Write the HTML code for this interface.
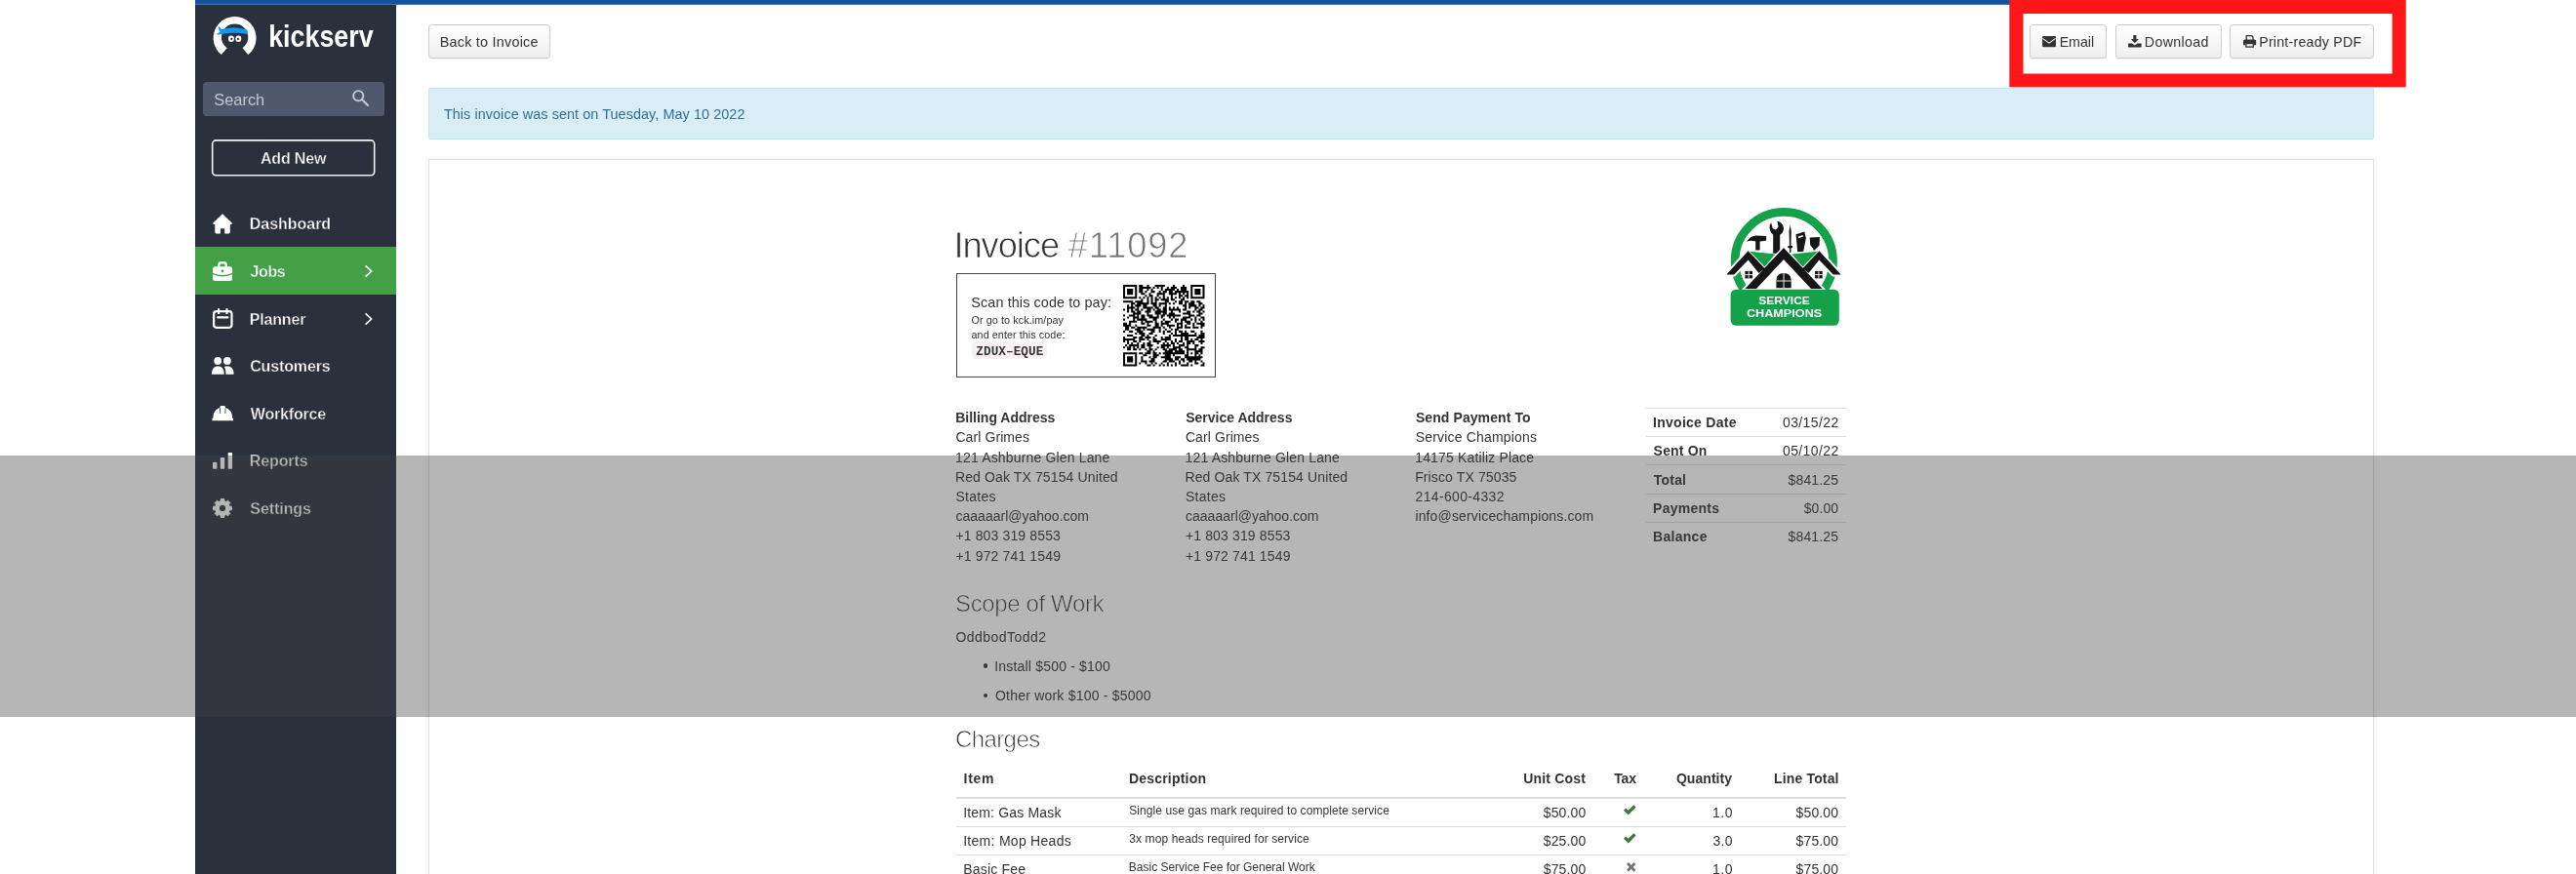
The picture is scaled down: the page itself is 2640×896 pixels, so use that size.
<!DOCTYPE html>
<html><head><meta charset="utf-8"><title>Invoice #11092</title>
<style>
html,body{margin:0;padding:0}
body{width:2640px;height:896px;overflow:hidden;background:#fff;position:relative;font-family:"Liberation Sans",sans-serif;color:#333}
.t{position:absolute;white-space:nowrap;display:block}
.r{position:absolute}
svg{position:absolute;overflow:visible}
#w{position:absolute;left:0;top:0;width:2640px;height:896px;overflow:hidden;will-change:transform}
</style></head><body><div id="w">
<div class="r" style="left:200px;top:0px;width:2265px;height:4px;background:#15549c;"></div>
<div class="r" style="left:406px;top:4px;width:2059px;height:1px;background:#3a70b0;"></div>
<div class="r" style="left:200px;top:4px;width:206px;height:1px;background:#3e75b2;"></div>
<div class="r" style="left:200px;top:5px;width:206px;height:891px;background:#2b303d;"></div>
<div class="r" style="left:207.5px;top:84px;width:186.6px;height:35px;background:#50586c;border-radius:4px;"></div>
<span class="t" style="left:219.18px;top:91px;font-size:16.4px;line-height:22px;color:#c4c8d4;letter-spacing:0.023px;">Search</span>
<svg style="left:361.2px;top:91.8px" width="17" height="17" viewBox="0 0 17 17"><circle cx="6.2" cy="6.2" r="5.1" fill="none" stroke="#c4c8d4" stroke-width="1.9"/><path d="M10 10 L16 16" stroke="#c4c8d4" stroke-width="2.2" stroke-linecap="round"/></svg>
<svg style="left:0;top:0" width="420" height="200" viewBox="0 0 420 200"><rect x="217.7" y="143.9" width="166" height="35.8" rx="3.6" fill="none" stroke="#f2f2f2" stroke-width="1.6"/></svg>
<span class="t" style="left:266.92px;top:152px;font-size:16px;line-height:21px;font-weight:700;color:#fff;letter-spacing:-0.149px;-webkit-text-stroke:.35px #2b303d;">Add New</span>
<div class="r" style="left:200px;top:253.2px;width:206px;height:48.9px;background:#43a047;"></div>
<span class="t" style="left:255.74px;top:219px;font-size:16px;line-height:21px;font-weight:700;color:#fff;letter-spacing:-0.021px;-webkit-text-stroke:.35px #2b303d;">Dashboard</span>
<span class="t" style="left:256.58px;top:268px;font-size:16px;line-height:21px;font-weight:700;color:#fff;letter-spacing:-0.393px;-webkit-text-stroke:.35px #43a047;">Jobs</span>
<span class="t" style="left:255.74px;top:317px;font-size:16px;line-height:21px;font-weight:700;color:#fff;letter-spacing:-0.168px;-webkit-text-stroke:.35px #2b303d;">Planner</span>
<span class="t" style="left:256.16px;top:365px;font-size:16px;line-height:21px;font-weight:700;color:#fff;letter-spacing:-0.125px;-webkit-text-stroke:.35px #2b303d;">Customers</span>
<span class="t" style="left:256.80px;top:414px;font-size:16px;line-height:21px;font-weight:700;color:#fff;letter-spacing:-0.176px;-webkit-text-stroke:.35px #2b303d;">Workforce</span>
<span class="t" style="left:255.74px;top:462px;font-size:16px;line-height:21px;font-weight:700;color:#fff;letter-spacing:-0.109px;-webkit-text-stroke:.35px #2b303d;">Reports</span>
<span class="t" style="left:256.35px;top:511px;font-size:16px;line-height:21px;font-weight:700;color:#fff;letter-spacing:-0.074px;-webkit-text-stroke:.35px #2b303d;">Settings</span>
<svg style="left:217.8px;top:218.7px" width="20.1" height="20.4" viewBox="0 0 20.1 20.4"><path fill="#fff" d="M10.05 0.3 L0.4 9.6 Q-0.2 10.6 0.9 11 L2.3 11 L2.3 19 Q2.3 20.4 3.7 20.4 L7.9 20.4 L7.9 15.2 L12.2 15.2 L12.2 20.4 L16.4 20.4 Q17.8 20.4 17.8 19 L17.8 11 L19.2 11 Q20.3 10.6 19.7 9.6 Z"/></svg>
<svg style="left:217.8px;top:267.8px" width="20.1" height="20.1" viewBox="0 0 20.1 20.1"><path d="M6.3 5.8 V3.7 Q6.3 1.2 8.8 1.2 H11.3 Q13.8 1.2 13.8 3.7 V5.8" fill="none" stroke="#fff" stroke-width="2.4"/><rect x="0" y="5.2" width="20.1" height="14.9" rx="2.5" fill="#fff"/><path d="M-0.6 12.4 Q10.05 17.2 20.7 12.4" fill="none" stroke="#43a047" stroke-width="1.5"/><circle cx="10" cy="9.8" r="1.4" fill="#43a047"/></svg>
<svg style="left:217.5px;top:316px" width="20.6" height="20.9" viewBox="0 0 20.6 20.9"><rect x="1.1" y="3.2" width="18.4" height="16.6" rx="2.7" fill="none" stroke="#fff" stroke-width="2.2"/><path d="M6.1 0.2 V6 M14.5 0.2 V6" stroke="#fff" stroke-width="2.1" fill="none"/><path d="M5.2 9.4 H15.4" stroke="#fff" stroke-width="2.2" stroke-linecap="round" fill="none"/></svg>
<svg style="left:216.6px;top:366.2px" width="22.6" height="17.7" viewBox="0 0 22.6 17.7"><circle cx="6.2" cy="3.9" r="3.9" fill="#fff"/><circle cx="15.9" cy="3.9" r="3.9" fill="#fff"/><path fill="#fff" d="M0 17.7 C0 12 2.5 9.6 6.35 9.6 C10.2 9.6 12.7 12 12.7 17.7 Z"/><path fill="#fff" d="M14.5 17.7 C14.5 14.4 14 12 12.9 10.1 C13.9 9.7 15 9.6 16 9.6 C20 9.6 22.6 12 22.6 17.7 Z"/></svg>
<svg style="left:216.6px;top:415.8px" width="22.5" height="15.2" viewBox="0 0 22.5 15.2"><path fill="#fff" d="M0.5 15.2 Q-0.5 13.2 1.5 12.2 Q1.2 4.6 8.5 1.8 L8.7 0.6 Q8.8 0 9.5 0 H13 Q13.7 0 13.8 0.6 L14 1.8 Q21.3 4.6 21 12.2 Q23 13.2 22 15.2 Z"/><path d="M8.3 2.2 L8.7 8 M14.2 2.2 L13.8 8" stroke="#2b303d" stroke-width="0.8"/></svg>
<svg style="left:217.9px;top:463.7px" width="20.1" height="16.8" viewBox="0 0 20.1 16.8"><rect x="0" y="9.8" width="4.4" height="7" rx="0.8" fill="#fff"/><rect x="7.8" y="4.9" width="4.4" height="11.9" rx="0.8" fill="#fff"/><rect x="15.7" y="0" width="4.4" height="16.8" rx="0.8" fill="#fff"/></svg>
<svg style="left:217.9px;top:510.6px" width="20" height="20" viewBox="0 0 20 20"><path fill="#fff" stroke="#fff" stroke-width="1" stroke-linejoin="round" fill-rule="evenodd" d="M8.03 2.87 L8.38 0.54 L11.62 0.54 L11.97 2.87 L13.65 3.56 L15.54 2.16 L17.84 4.46 L16.44 6.35 L17.13 8.03 L19.46 8.38 L19.46 11.62 L17.13 11.97 L16.44 13.65 L17.84 15.54 L15.54 17.84 L13.65 16.44 L11.97 17.13 L11.62 19.46 L8.38 19.46 L8.03 17.13 L6.35 16.44 L4.46 17.84 L2.16 15.54 L3.56 13.65 L2.87 11.97 L0.54 11.62 L0.54 8.38 L2.87 8.03 L3.56 6.35 L2.16 4.46 L4.46 2.16 L6.35 3.56 Z M13.7 10 A3.7 3.7 0 1 0 6.3 10 A3.7 3.7 0 1 0 13.7 10 Z"/></svg>
<svg style="left:373.6px;top:271.9px" width="8" height="12" viewBox="0 0 8 12"><path d="M0.6 0.4 L6.6 6 L0.6 11.6" fill="none" stroke="#fff" stroke-width="1.6"/></svg>
<svg style="left:373.6px;top:320.5px" width="8" height="12" viewBox="0 0 8 12"><path d="M0.6 0.4 L6.6 6 L0.6 11.6" fill="none" stroke="#fff" stroke-width="1.6"/></svg>
<svg style="left:216px;top:14px" width="50" height="46" viewBox="216 14 50 46">
<path fill="#fff" d="M226.9 56.1 A22 22 0 1 1 254.3 56.1 L248.5 49.3 A13.7 13.7 0 1 0 232.7 49.3 Z"/>
<path fill="#0c97fb" d="M226.8 30.2 Q241 25.9 253.5 30.7 L254.2 35.1 Q240.6 32.3 226.8 34.9 Z"/>
<path fill="#0c97fb" d="M227.6 31 L224.6 26.9 Q222.6 29 225.6 32.4 L222 35 Q223.6 36.6 227.4 34.6 Z"/>
<ellipse cx="236.9" cy="39.7" rx="3" ry="3.3" fill="#fff"/><ellipse cx="244.3" cy="39.7" rx="3" ry="3.3" fill="#fff"/>
<circle cx="237.3" cy="39.9" r="1.15" fill="#2b303d"/><circle cx="243.9" cy="39.9" r="1.15" fill="#2b303d"/>
<text x="275.2" y="48" font-family="Liberation Sans, sans-serif" font-weight="700" font-size="31" fill="#fff" textLength="107.4" lengthAdjust="spacingAndGlyphs">kickserv</text>
</svg>
<div class="r" style="left:438.9px;top:25.2px;width:125.1px;height:34.4px;background:linear-gradient(#fff,#eee);box-sizing:border-box;border:1px solid #ccc;border-radius:3.2px;box-shadow:0 1px 1px rgba(0,0,0,.06);"></div>
<span class="t" style="left:450.72px;top:33px;font-size:14.4px;line-height:20px;letter-spacing:0.232px;">Back to Invoice</span>
<div class="r" style="left:2080.2px;top:25.2px;width:78.7px;height:34.4px;background:linear-gradient(#fff,#eee);box-sizing:border-box;border:1px solid #ccc;border-radius:3.2px;box-shadow:0 1px 1px rgba(0,0,0,.06);"></div>
<span class="t" style="left:2110.64px;top:33px;font-size:14.2px;line-height:20px;">Email</span>
<div class="r" style="left:2168.2px;top:25.2px;width:108.6px;height:34.4px;background:linear-gradient(#fff,#eee);box-sizing:border-box;border:1px solid #ccc;border-radius:3.2px;box-shadow:0 1px 1px rgba(0,0,0,.06);"></div>
<span class="t" style="left:2197.84px;top:33px;font-size:14.2px;line-height:20px;letter-spacing:0.359px;">Download</span>
<div class="r" style="left:2285.4px;top:25.2px;width:147.6px;height:34.4px;background:linear-gradient(#fff,#eee);box-sizing:border-box;border:1px solid #ccc;border-radius:3.2px;box-shadow:0 1px 1px rgba(0,0,0,.06);"></div>
<span class="t" style="left:2315.24px;top:33px;font-size:14.2px;line-height:20px;letter-spacing:0.223px;">Print-ready PDF</span>
<svg style="left:2093.1px;top:37.4px" width="14" height="11.3" viewBox="0 0 14 11.3"><rect width="14" height="11.3" rx="1.4" fill="#333"/><path d="M0.3 2.4 L7 7.2 L13.7 2.4" fill="none" stroke="#f4f4f4" stroke-width="1.1"/></svg>
<svg style="left:2181px;top:35.5px" width="13.7" height="12.4" viewBox="0 0 13.7 12.4"><path fill="#333" d="M5.3 0 H8.4 V4 H11 L6.85 8.3 L2.7 4 H5.3 Z"/><path fill="#333" d="M0.6 8.4 H4 L6.85 10.4 L9.7 8.4 H13.1 Q13.7 8.4 13.7 9 V11.8 Q13.7 12.4 13.1 12.4 H0.6 Q0 12.4 0 11.8 V9 Q0 8.4 0.6 8.4 Z"/></svg>
<svg style="left:2298.6px;top:35.9px" width="13.2" height="12.8" viewBox="0 0 13.2 12.8"><path fill="none" stroke="#333" stroke-width="1.3" d="M3.2 5 V0.7 H8.6 L10 2.1 V5"/><path fill="#333" d="M1.6 4.6 H11.6 Q13.2 4.6 13.2 6.2 V9.6 Q13.2 10.2 12.6 10.2 H11 V8 H2.2 V10.2 H0.6 Q0 10.2 0 9.6 V6.2 Q0 4.6 1.6 4.6 Z"/><rect x="2.9" y="8.6" width="7.4" height="3.5" fill="none" stroke="#333" stroke-width="1.3"/></svg>
<div class="r" style="left:438.9px;top:90.4px;width:1994.3px;height:52.2px;background:#d9edf7;box-sizing:border-box;border:1px solid #bce8f1;border-radius:2px;"></div>
<span class="t" style="left:454.88px;top:107px;font-size:14.4px;line-height:20px;color:#31708f;letter-spacing:0.073px;">This invoice was sent on Tuesday, May 10 2022</span>
<div class="r" style="left:438.5px;top:163.3px;width:1994.7px;height:760px;background:#fff;box-sizing:border-box;border:1px solid #e0e0e0;box-shadow:0 0 5px rgba(0,0,0,.08);"></div>
<span class="t" style="left:977.46px;top:229px;font-size:36.3px;line-height:45px;letter-spacing:-1.060px;-webkit-text-stroke:.75px #fff;">Invoice</span>
<span class="t" style="left:1094.85px;top:229px;font-size:36.3px;line-height:45px;color:#777;letter-spacing:0.810px;-webkit-text-stroke:.75px #fff;">#11092</span>
<div class="r" style="left:979.9px;top:280.3px;width:266.5px;height:106.7px;background:#fff;box-sizing:border-box;border:1px solid #444;"></div>
<span class="t" style="left:995.37px;top:300px;font-size:14.4px;line-height:20px;letter-spacing:0.097px;">Scan this code to pay:</span>
<span class="t" style="left:995.50px;top:320px;font-size:10.8px;line-height:16px;letter-spacing:0.083px;">Or go to kck.im/pay</span>
<span class="t" style="left:995.55px;top:335px;font-size:10.8px;line-height:16px;letter-spacing:0.056px;">and enter this code:</span>
<div class="r" style="left:996px;top:350.3px;width:77px;height:18px;background:#f9f2f4;border-radius:4px;"></div>
<span class="t" style="left:1000.27px;top:352px;font-size:12.6px;line-height:18px;font-weight:700;font-family:'Liberation Mono',monospace;letter-spacing:0.124px;">ZDUX–EQUE</span>
<svg style="left:1150.8px;top:292px" width="83.5" height="83.5" viewBox="0 0 41 41"><path fill="#000" d="M0 0h7v1h-7zM8 0h2v1h-2zM12 0h1v1h-1zM16 0h5v1h-5zM25 0h1v1h-1zM30 0h1v1h-1zM34 0h7v1h-7zM0 1h1v1h-1zM6 1h1v1h-1zM8 1h6v1h-6zM15 1h1v1h-1zM17 1h1v1h-1zM19 1h1v1h-1zM22 1h1v1h-1zM24 1h3v1h-3zM29 1h3v1h-3zM34 1h1v1h-1zM40 1h1v1h-1zM0 2h1v1h-1zM2 2h3v1h-3zM6 2h1v1h-1zM8 2h2v1h-2zM12 2h1v1h-1zM14 2h1v1h-1zM19 2h1v1h-1zM21 2h5v1h-5zM27 2h1v1h-1zM29 2h3v1h-3zM34 2h1v1h-1zM36 2h3v1h-3zM40 2h1v1h-1zM0 3h1v1h-1zM2 3h3v1h-3zM6 3h1v1h-1zM8 3h2v1h-2zM11 3h1v1h-1zM14 3h2v1h-2zM18 3h1v1h-1zM20 3h2v1h-2zM23 3h2v1h-2zM26 3h7v1h-7zM34 3h1v1h-1zM36 3h3v1h-3zM40 3h1v1h-1zM0 4h1v1h-1zM2 4h3v1h-3zM6 4h1v1h-1zM9 4h2v1h-2zM13 4h1v1h-1zM17 4h4v1h-4zM23 4h4v1h-4zM28 4h1v1h-1zM30 4h1v1h-1zM32 4h1v1h-1zM34 4h1v1h-1zM36 4h3v1h-3zM40 4h1v1h-1zM0 5h1v1h-1zM6 5h1v1h-1zM11 5h1v1h-1zM13 5h2v1h-2zM17 5h1v1h-1zM20 5h1v1h-1zM24 5h1v1h-1zM28 5h2v1h-2zM31 5h2v1h-2zM34 5h1v1h-1zM40 5h1v1h-1zM0 6h7v1h-7zM8 6h1v1h-1zM10 6h1v1h-1zM12 6h1v1h-1zM14 6h1v1h-1zM16 6h1v1h-1zM18 6h1v1h-1zM20 6h1v1h-1zM22 6h1v1h-1zM24 6h1v1h-1zM26 6h1v1h-1zM28 6h1v1h-1zM30 6h1v1h-1zM32 6h1v1h-1zM34 6h7v1h-7zM9 7h1v1h-1zM12 7h1v1h-1zM14 7h1v1h-1zM16 7h2v1h-2zM19 7h4v1h-4zM24 7h2v1h-2zM29 7h2v1h-2zM0 8h5v1h-5zM6 8h4v1h-4zM12 8h1v1h-1zM14 8h1v1h-1zM16 8h1v1h-1zM21 8h2v1h-2zM26 8h1v1h-1zM28 8h2v1h-2zM31 8h2v1h-2zM34 8h2v1h-2zM37 8h2v1h-2zM4 9h2v1h-2zM7 9h6v1h-6zM14 9h3v1h-3zM18 9h4v1h-4zM23 9h1v1h-1zM25 9h1v1h-1zM28 9h2v1h-2zM31 9h1v1h-1zM33 9h3v1h-3zM38 9h2v1h-2zM2 10h1v1h-1zM4 10h1v1h-1zM6 10h3v1h-3zM10 10h2v1h-2zM15 10h2v1h-2zM18 10h1v1h-1zM21 10h1v1h-1zM30 10h2v1h-2zM33 10h4v1h-4zM38 10h1v1h-1zM40 10h1v1h-1zM2 11h4v1h-4zM7 11h1v1h-1zM10 11h5v1h-5zM16 11h2v1h-2zM20 11h2v1h-2zM23 11h1v1h-1zM25 11h1v1h-1zM27 11h1v1h-1zM31 11h1v1h-1zM33 11h1v1h-1zM36 11h2v1h-2zM39 11h2v1h-2zM0 12h1v1h-1zM2 12h1v1h-1zM4 12h1v1h-1zM6 12h2v1h-2zM9 12h1v1h-1zM12 12h2v1h-2zM15 12h1v1h-1zM17 12h2v1h-2zM20 12h2v1h-2zM23 12h6v1h-6zM30 12h2v1h-2zM36 12h1v1h-1zM38 12h2v1h-2zM2 13h1v1h-1zM4 13h2v1h-2zM7 13h2v1h-2zM11 13h3v1h-3zM16 13h6v1h-6zM24 13h1v1h-1zM28 13h1v1h-1zM32 13h2v1h-2zM35 13h1v1h-1zM37 13h2v1h-2zM40 13h1v1h-1zM5 14h4v1h-4zM12 14h1v1h-1zM16 14h3v1h-3zM20 14h2v1h-2zM23 14h3v1h-3zM30 14h4v1h-4zM38 14h2v1h-2zM0 15h1v1h-1zM3 15h3v1h-3zM7 15h1v1h-1zM9 15h2v1h-2zM12 15h3v1h-3zM17 15h1v1h-1zM19 15h2v1h-2zM22 15h7v1h-7zM33 15h3v1h-3zM37 15h2v1h-2zM2 16h1v1h-1zM5 16h3v1h-3zM9 16h2v1h-2zM13 16h5v1h-5zM19 16h1v1h-1zM23 16h1v1h-1zM25 16h1v1h-1zM30 16h4v1h-4zM36 16h1v1h-1zM39 16h2v1h-2zM0 17h1v1h-1zM5 17h1v1h-1zM7 17h5v1h-5zM15 17h2v1h-2zM20 17h1v1h-1zM24 17h1v1h-1zM26 17h2v1h-2zM29 17h3v1h-3zM34 17h1v1h-1zM36 17h1v1h-1zM38 17h1v1h-1zM40 17h1v1h-1zM3 18h4v1h-4zM9 18h1v1h-1zM11 18h4v1h-4zM16 18h1v1h-1zM19 18h1v1h-1zM21 18h3v1h-3zM26 18h1v1h-1zM29 18h1v1h-1zM31 18h3v1h-3zM36 18h1v1h-1zM39 18h1v1h-1zM0 19h2v1h-2zM3 19h1v1h-1zM9 19h2v1h-2zM12 19h1v1h-1zM16 19h2v1h-2zM19 19h4v1h-4zM27 19h3v1h-3zM32 19h2v1h-2zM35 19h1v1h-1zM37 19h4v1h-4zM0 20h4v1h-4zM6 20h1v1h-1zM12 20h2v1h-2zM16 20h2v1h-2zM19 20h1v1h-1zM22 20h4v1h-4zM27 20h1v1h-1zM29 20h1v1h-1zM31 20h1v1h-1zM35 20h1v1h-1zM39 20h2v1h-2zM1 21h2v1h-2zM4 21h2v1h-2zM7 21h5v1h-5zM15 21h4v1h-4zM20 21h1v1h-1zM23 21h1v1h-1zM27 21h3v1h-3zM31 21h3v1h-3zM35 21h3v1h-3zM39 21h1v1h-1zM1 22h2v1h-2zM6 22h3v1h-3zM10 22h1v1h-1zM12 22h4v1h-4zM18 22h1v1h-1zM21 22h1v1h-1zM24 22h1v1h-1zM26 22h2v1h-2zM0 23h1v1h-1zM3 23h2v1h-2zM7 23h3v1h-3zM14 23h2v1h-2zM18 23h1v1h-1zM20 23h1v1h-1zM22 23h2v1h-2zM26 23h1v1h-1zM28 23h2v1h-2zM31 23h1v1h-1zM34 23h2v1h-2zM39 23h1v1h-1zM6 24h1v1h-1zM8 24h3v1h-3zM13 24h2v1h-2zM20 24h1v1h-1zM24 24h1v1h-1zM26 24h1v1h-1zM29 24h4v1h-4zM36 24h1v1h-1zM39 24h2v1h-2zM2 25h3v1h-3zM9 25h2v1h-2zM12 25h1v1h-1zM16 25h1v1h-1zM23 25h1v1h-1zM25 25h12v1h-12zM38 25h3v1h-3zM0 26h1v1h-1zM5 26h2v1h-2zM8 26h2v1h-2zM11 26h3v1h-3zM15 26h1v1h-1zM19 26h1v1h-1zM21 26h3v1h-3zM29 26h1v1h-1zM31 26h2v1h-2zM37 26h4v1h-4zM0 27h6v1h-6zM8 27h3v1h-3zM12 27h1v1h-1zM15 27h2v1h-2zM19 27h5v1h-5zM26 27h1v1h-1zM29 27h1v1h-1zM31 27h2v1h-2zM34 27h1v1h-1zM36 27h2v1h-2zM39 27h1v1h-1zM0 28h1v1h-1zM2 28h1v1h-1zM5 28h2v1h-2zM8 28h1v1h-1zM13 28h1v1h-1zM15 28h4v1h-4zM21 28h1v1h-1zM24 28h1v1h-1zM26 28h1v1h-1zM28 28h2v1h-2zM32 28h4v1h-4zM38 28h3v1h-3zM2 29h1v1h-1zM4 29h1v1h-1zM7 29h1v1h-1zM10 29h1v1h-1zM12 29h2v1h-2zM17 29h1v1h-1zM20 29h1v1h-1zM22 29h1v1h-1zM24 29h2v1h-2zM27 29h1v1h-1zM30 29h1v1h-1zM32 29h2v1h-2zM35 29h1v1h-1zM39 29h1v1h-1zM1 30h1v1h-1zM3 30h5v1h-5zM9 30h2v1h-2zM12 30h3v1h-3zM19 30h5v1h-5zM25 30h1v1h-1zM28 30h3v1h-3zM32 30h1v1h-1zM36 30h2v1h-2zM0 31h1v1h-1zM2 31h2v1h-2zM5 31h1v1h-1zM7 31h1v1h-1zM9 31h2v1h-2zM13 31h1v1h-1zM17 31h1v1h-1zM19 31h2v1h-2zM22 31h1v1h-1zM25 31h4v1h-4zM31 31h2v1h-2zM36 31h1v1h-1zM39 31h2v1h-2zM2 32h2v1h-2zM5 32h2v1h-2zM8 32h1v1h-1zM11 32h1v1h-1zM13 32h2v1h-2zM16 32h1v1h-1zM20 32h2v1h-2zM23 32h4v1h-4zM28 32h2v1h-2zM32 32h5v1h-5zM38 32h2v1h-2zM12 33h2v1h-2zM15 33h1v1h-1zM21 33h4v1h-4zM26 33h5v1h-5zM32 33h1v1h-1zM36 33h4v1h-4zM0 34h7v1h-7zM8 34h2v1h-2zM11 34h3v1h-3zM15 34h2v1h-2zM18 34h1v1h-1zM20 34h11v1h-11zM32 34h1v1h-1zM34 34h1v1h-1zM36 34h2v1h-2zM39 34h1v1h-1zM0 35h1v1h-1zM6 35h1v1h-1zM10 35h2v1h-2zM15 35h3v1h-3zM21 35h3v1h-3zM25 35h1v1h-1zM31 35h2v1h-2zM36 35h1v1h-1zM38 35h1v1h-1zM0 36h1v1h-1zM2 36h3v1h-3zM6 36h1v1h-1zM9 36h1v1h-1zM13 36h1v1h-1zM15 36h2v1h-2zM19 36h5v1h-5zM26 36h3v1h-3zM31 36h9v1h-9zM0 37h1v1h-1zM2 37h3v1h-3zM6 37h1v1h-1zM9 37h1v1h-1zM14 37h2v1h-2zM21 37h4v1h-4zM26 37h2v1h-2zM29 37h2v1h-2zM32 37h7v1h-7zM0 38h1v1h-1zM2 38h3v1h-3zM6 38h1v1h-1zM9 38h3v1h-3zM13 38h3v1h-3zM20 38h2v1h-2zM23 38h3v1h-3zM28 38h1v1h-1zM30 38h1v1h-1zM33 38h2v1h-2zM36 38h1v1h-1zM39 38h1v1h-1zM0 39h1v1h-1zM6 39h1v1h-1zM8 39h1v1h-1zM11 39h1v1h-1zM14 39h1v1h-1zM16 39h1v1h-1zM19 39h1v1h-1zM22 39h1v1h-1zM26 39h1v1h-1zM28 39h1v1h-1zM32 39h1v1h-1zM36 39h2v1h-2zM40 39h1v1h-1zM0 40h7v1h-7zM12 40h2v1h-2zM15 40h1v1h-1zM18 40h1v1h-1zM20 40h1v1h-1zM22 40h1v1h-1zM24 40h1v1h-1zM26 40h1v1h-1zM29 40h4v1h-4zM34 40h1v1h-1zM39 40h2v1h-2z"/></svg>
<svg style="left:1760px;top:205px" width="140" height="135" viewBox="1760 205 140 135">
<circle cx="1828.3" cy="267.6" r="50.2" fill="none" stroke="#15a04a" stroke-width="8.7"/>
<path fill="#fff" stroke="#fff" stroke-width="4" d="M1769.3 281.6 L1791.6 257.2 L1808.5 275.1 L1802.5 280 L1791.6 266.4 L1777.2 281.6 Z M1886.7 281.6 L1864.4 257.2 L1847.5 275.1 L1853.5 280 L1864.4 266.4 L1878.8 281.6 Z M1788.4 295.9 L1828 253.9 L1867.6 295.9 L1856 295.9 L1828 265.9 L1800 295.9 Z"/>
<path fill="#15a04a" d="M1793.3 257.7 L1819.3 260.4 L1808.5 273.5 Z M1862.8 257.7 L1836.2 260.4 L1847.6 273.5 Z"/>
<path fill="#161616" d="M1769.3 281.6 L1791.6 257.2 L1808.5 275.1 L1802.5 280 L1791.6 266.4 L1777.2 281.6 Z M1886.7 281.6 L1864.4 257.2 L1847.5 275.1 L1853.5 280 L1864.4 266.4 L1878.8 281.6 Z M1788.4 295.9 L1828 253.9 L1867.6 295.9 L1856 295.9 L1828 265.9 L1800 295.9 Z"/>
<rect x="1788.4" y="277.8" width="7.6" height="7.6" fill="#161616"/><path d="M1792.2 277.8 V285.4 M1788.4 281.6 H1796" stroke="#fff" stroke-width="0.9"/>
<rect x="1860.1" y="277.8" width="7.6" height="7.6" fill="#161616"/><path d="M1863.9 277.8 V285.4 M1860.1 281.6 H1867.7" stroke="#fff" stroke-width="0.9"/>
<path fill="#161616" d="M1820.4 295.2 V287.6 Q1820.4 280 1828.05 280 Q1835.7 280 1835.7 287.6 V295.2 Z"/><path d="M1828.05 280 V295.2 M1820.4 288 H1835.7" stroke="#fff" stroke-width="0.9"/>
<path fill="#161616" d="M1790 247.9 Q1794 241.4 1800 241.5 L1810.1 241.9 L1810.1 246.8 L1803.6 247.6 L1803.6 256.4 L1799.2 256.4 L1799.2 247.4 Q1794 246 1790 247.9 Z"/>
<path fill="#161616" d="M1817.2 259.5 L1817.2 240.5 Q1813 237.5 1813.6 231 L1815.2 228.2 L1816.8 234.2 L1820 235.6 L1822.6 232.6 L1821.4 226.8 Q1827 228 1828 233.4 Q1828.2 238 1824.2 240.8 L1824.2 256 L1820 260 Z"/>
<path fill="#161616" d="M1834 258.8 L1834 254.4 L1832.2 254 L1832.2 252.2 L1834 251.8 L1833.5 237 L1834.6 230.5 L1835.8 237 L1835.4 251.8 L1837.2 252.2 L1837.2 254 L1835.4 254.4 L1835.6 258.8 Z"/>
<path fill="#161616" fill-rule="evenodd" d="M1840.5 240.3 L1849.2 237.6 L1850.9 244.1 L1848.2 257.7 L1842.2 258.3 Z M1842.7 242.5 L1847.6 240.9 L1848.2 242.5 L1843.3 244.3 Z"/>
<path fill="#161616" d="M1854.7 243.6 L1865 243 L1864.5 251.7 L1860.7 255.2 L1860.1 256.6 L1858.5 256.6 L1858.3 255 L1855.2 251.2 Z"/>
<rect x="1773.6" y="296.7" width="111.2" height="37.1" rx="5.5" fill="#15a04a"/>
<text x="1828.6" y="311.8" text-anchor="middle" font-family="Liberation Sans, sans-serif" font-weight="700" font-size="11.4" fill="#fff" textLength="52.5" lengthAdjust="spacingAndGlyphs">SERVICE</text>
<text x="1828.6" y="324.6" text-anchor="middle" font-family="Liberation Sans, sans-serif" font-weight="700" font-size="11.4" fill="#fff" textLength="77.3" lengthAdjust="spacingAndGlyphs">CHAMPIONS</text>
</svg>
<span class="t" style="left:979.18px;top:418px;font-size:14px;line-height:20px;font-weight:700;">Billing Address</span>
<span class="t" style="left:979.40px;top:438px;font-size:14px;line-height:20px;letter-spacing:0.093px;">Carl Grimes</span>
<span class="t" style="left:979.04px;top:459px;font-size:14px;line-height:20px;letter-spacing:0.161px;">121 Ashburne Glen Lane</span>
<span class="t" style="left:978.95px;top:479px;font-size:14px;line-height:20px;letter-spacing:0.123px;">Red Oak TX 75154 United</span>
<span class="t" style="left:979.48px;top:499px;font-size:14px;line-height:20px;letter-spacing:0.263px;">States</span>
<span class="t" style="left:979.51px;top:519px;font-size:14px;line-height:20px;letter-spacing:0.006px;">caaaaarl@yahoo.com</span>
<span class="t" style="left:979.43px;top:539px;font-size:14px;line-height:20px;letter-spacing:0.140px;">+1 803 319 8553</span>
<span class="t" style="left:979.43px;top:560px;font-size:14px;line-height:20px;letter-spacing:0.144px;">+1 972 741 1549</span>
<span class="t" style="left:1215.21px;top:418px;font-size:14px;line-height:20px;font-weight:700;">Service Address</span>
<span class="t" style="left:1214.90px;top:438px;font-size:14px;line-height:20px;letter-spacing:0.093px;">Carl Grimes</span>
<span class="t" style="left:1214.54px;top:459px;font-size:14px;line-height:20px;letter-spacing:0.161px;">121 Ashburne Glen Lane</span>
<span class="t" style="left:1214.45px;top:479px;font-size:14px;line-height:20px;letter-spacing:0.123px;">Red Oak TX 75154 United</span>
<span class="t" style="left:1214.98px;top:499px;font-size:14px;line-height:20px;letter-spacing:0.263px;">States</span>
<span class="t" style="left:1215.01px;top:519px;font-size:14px;line-height:20px;letter-spacing:0.006px;">caaaaarl@yahoo.com</span>
<span class="t" style="left:1214.93px;top:539px;font-size:14px;line-height:20px;letter-spacing:0.140px;">+1 803 319 8553</span>
<span class="t" style="left:1214.93px;top:560px;font-size:14px;line-height:20px;letter-spacing:0.144px;">+1 972 741 1549</span>
<span class="t" style="left:1450.91px;top:418px;font-size:14px;line-height:20px;font-weight:700;letter-spacing:0.086px;">Send Payment To</span>
<span class="t" style="left:1450.68px;top:438px;font-size:14px;line-height:20px;letter-spacing:0.178px;">Service Champions</span>
<span class="t" style="left:1450.24px;top:459px;font-size:14px;line-height:20px;letter-spacing:0.150px;">14175 Katiliz Place</span>
<span class="t" style="left:1450.15px;top:479px;font-size:14px;line-height:20px;letter-spacing:0.125px;">Frisco TX 75035</span>
<span class="t" style="left:1450.60px;top:499px;font-size:14px;line-height:20px;letter-spacing:0.337px;">214-600-4332</span>
<span class="t" style="left:1450.38px;top:519px;font-size:14px;line-height:20px;letter-spacing:0.153px;">info@servicechampions.com</span>
<div class="r" style="left:1687px;top:417.5px;width:205.2px;height:1px;background:#ddd;"></div>
<span class="t" style="left:1694.08px;top:423px;font-size:14px;line-height:20px;font-weight:700;letter-spacing:0.265px;">Invoice Date</span>
<span class="t" style="left:1826.97px;top:423px;font-size:14px;line-height:20px;letter-spacing:0.392px;">03/15/22</span>
<div class="r" style="left:1687px;top:446.9px;width:205.2px;height:1px;background:#ddd;"></div>
<span class="t" style="left:1694.61px;top:452px;font-size:14px;line-height:20px;font-weight:700;letter-spacing:0.181px;">Sent On</span>
<span class="t" style="left:1826.97px;top:452px;font-size:14px;line-height:20px;letter-spacing:0.392px;">05/10/22</span>
<div class="r" style="left:1687px;top:476.3px;width:205.2px;height:1px;background:#ddd;"></div>
<span class="t" style="left:1694.86px;top:482px;font-size:14px;line-height:20px;font-weight:700;letter-spacing:0.181px;">Total</span>
<span class="t" style="left:1832.56px;top:482px;font-size:14px;line-height:20px;letter-spacing:0.151px;">$841.25</span>
<div class="r" style="left:1687px;top:505.7px;width:205.2px;height:1px;background:#ddd;"></div>
<span class="t" style="left:1694.08px;top:511px;font-size:14px;line-height:20px;font-weight:700;letter-spacing:0.250px;">Payments</span>
<span class="t" style="left:1848.66px;top:511px;font-size:14px;line-height:20px;letter-spacing:0.086px;">$0.00</span>
<div class="r" style="left:1687px;top:535.1px;width:205.2px;height:1px;background:#ddd;"></div>
<span class="t" style="left:1694.08px;top:540px;font-size:14px;line-height:20px;font-weight:700;letter-spacing:0.283px;">Balance</span>
<span class="t" style="left:1832.56px;top:540px;font-size:14px;line-height:20px;letter-spacing:0.151px;">$841.25</span>
<span class="t" style="left:979.04px;top:603px;font-size:24px;line-height:31px;letter-spacing:-0.371px;-webkit-text-stroke:.7px #fff;">Scope of Work</span>
<span class="t" style="left:979.46px;top:643px;font-size:14px;line-height:20px;letter-spacing:0.467px;">OddbodTodd2</span>
<div class="r" style="left:1007.6px;top:680.4px;width:4.6px;height:4.6px;background:#333;border-radius:50%;"></div>
<div class="r" style="left:1007.6px;top:710.8px;width:4.6px;height:4.6px;background:#333;border-radius:50%;"></div>
<span class="t" style="left:1019.31px;top:673px;font-size:14px;line-height:20px;letter-spacing:0.185px;">Install $500 - $100</span>
<span class="t" style="left:1019.96px;top:703px;font-size:14px;line-height:20px;letter-spacing:0.214px;">Other work $100 - $5000</span>
<span class="t" style="left:978.90px;top:742px;font-size:24px;line-height:31px;letter-spacing:-0.576px;-webkit-text-stroke:.7px #fff;">Charges</span>
<span class="t" style="left:987.58px;top:788px;font-size:14px;line-height:20px;font-weight:700;letter-spacing:0.693px;">Item</span>
<span class="t" style="left:1156.88px;top:788px;font-size:14px;line-height:20px;font-weight:700;letter-spacing:0.216px;">Description</span>
<span class="t" style="left:1561.16px;top:788px;font-size:14px;line-height:20px;font-weight:700;letter-spacing:0.187px;">Unit Cost</span>
<span class="t" style="left:1654.26px;top:788px;font-size:14px;line-height:20px;font-weight:700;letter-spacing:-0.174px;">Tax</span>
<span class="t" style="left:1717.94px;top:788px;font-size:14px;line-height:20px;font-weight:700;letter-spacing:0.047px;">Quantity</span>
<span class="t" style="left:1818.08px;top:788px;font-size:14px;line-height:20px;font-weight:700;letter-spacing:0.148px;">Line Total</span>
<div class="r" style="left:980px;top:816.6px;width:912px;height:2.1px;background:#ddd;"></div>
<div class="r" style="left:980px;top:847.3px;width:912px;height:1px;background:#ddd;"></div>
<div class="r" style="left:980px;top:876px;width:912px;height:1px;background:#ddd;"></div>
<span class="t" style="left:987.21px;top:823px;font-size:14px;line-height:20px;letter-spacing:0.172px;">Item: Gas Mask</span>
<span class="t" style="left:1157.27px;top:822px;font-size:12px;line-height:18px;letter-spacing:0.080px;">Single use gas mark required to complete service</span>
<span class="t" style="left:1581.76px;top:823px;font-size:14px;line-height:20px;letter-spacing:0.132px;">$50.00</span>
<span class="t" style="left:1754.94px;top:823px;font-size:14px;line-height:20px;letter-spacing:0.568px;">1.0</span>
<span class="t" style="left:1840.56px;top:823px;font-size:14px;line-height:20px;letter-spacing:0.132px;">$50.00</span>
<span class="t" style="left:987.21px;top:852px;font-size:14px;line-height:20px;letter-spacing:0.278px;">Item: Mop Heads</span>
<span class="t" style="left:1157.34px;top:851px;font-size:12px;line-height:18px;letter-spacing:0.093px;">3x mop heads required for service</span>
<span class="t" style="left:1581.76px;top:852px;font-size:14px;line-height:20px;letter-spacing:0.132px;">$25.00</span>
<span class="t" style="left:1755.47px;top:852px;font-size:14px;line-height:20px;letter-spacing:0.302px;">3.0</span>
<span class="t" style="left:1840.56px;top:852px;font-size:14px;line-height:20px;letter-spacing:0.132px;">$75.00</span>
<span class="t" style="left:987.35px;top:881px;font-size:14px;line-height:20px;letter-spacing:0.165px;">Basic Fee</span>
<span class="t" style="left:1156.82px;top:880px;font-size:12px;line-height:18px;letter-spacing:-0.007px;">Basic Service Fee for General Work</span>
<span class="t" style="left:1581.76px;top:881px;font-size:14px;line-height:20px;letter-spacing:0.132px;">$75.00</span>
<span class="t" style="left:1754.94px;top:881px;font-size:14px;line-height:20px;letter-spacing:0.568px;">1.0</span>
<span class="t" style="left:1840.56px;top:881px;font-size:14px;line-height:20px;letter-spacing:0.132px;">$75.00</span>
<svg style="left:1663.7px;top:825px" width="12.6" height="10.4" viewBox="0 0 12.6 10.4"><path d="M0 5.7 L2.3 3.4 L4.7 5.8 L10.3 0.2 L12.6 2.5 L4.7 10.4 Z" fill="#3c763d"/></svg>
<svg style="left:1663.7px;top:854.4px" width="12.6" height="10.4" viewBox="0 0 12.6 10.4"><path d="M0 5.7 L2.3 3.4 L4.7 5.8 L10.3 0.2 L12.6 2.5 L4.7 10.4 Z" fill="#3c763d"/></svg>
<svg style="left:1666.8px;top:884.1px" width="9.5" height="9.8" viewBox="0 0 9.5 9.8"><path d="M2 2.1 L7.5 7.7 M7.5 2.1 L2 7.7" stroke="#777" stroke-width="2.9" stroke-linecap="square" fill="none"/></svg>
<div class="r" style="left:0px;top:467px;width:2640px;height:268px;background:rgba(64,64,64,.385);"></div>
<svg style="left:0;top:0" width="2640" height="100" viewBox="0 0 2640 100"><path fill="#fd1719" fill-rule="evenodd" d="M2059.3 -2 H2465.7 V89.3 H2059.3 Z M2073.5 14.1 V75.4 H2451.6 V14.1 Z"/></svg>
</div></body></html>
